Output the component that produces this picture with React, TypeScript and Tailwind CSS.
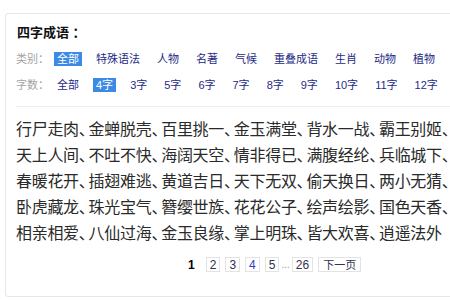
const categories = ['全部', '特殊语法', '人物', '名著', '气候', '重叠成语', '生肖', '动物', '植物', '其他'];
const counts = ['全部', '4字', '3字', '5字', '6字', '7字', '8字', '9字', '10字', '11字', '12字'];

const idioms = [
  '行尸走肉', '金蝉脱壳', '百里挑一', '金玉满堂', '背水一战', '霸王别姬',
  '天上人间', '不吐不快', '海阔天空', '情非得已', '满腹经纶', '兵临城下',
  '春暖花开', '插翅难逃', '黄道吉日', '天下无双', '偷天换日', '两小无猜',
  '卧虎藏龙', '珠光宝气', '簪缨世族', '花花公子', '绘声绘影', '国色天香',
  '相亲相爱', '八仙过海', '金玉良缘', '掌上明珠', '皆大欢喜', '逍遥法外',
];

function FilterRow({ label, items, active }: { label: string; items: string[]; active: string }) {
  return (
    <div className="flex items-center h-[26px] gap-[11px] whitespace-nowrap text-[11px]">
      <span className="text-[#a3a3a3] w-[27px]">{label}</span>
      {items.map((item) => (
        <span
          key={item}
          className={
            item === active
              ? 'px-[3px] h-[14px] leading-[14px] bg-[#3d8ae6] text-white'
              : 'px-[3px] h-[14px] leading-[14px] text-[#252a86]'
          }
        >
          {item}
        </span>
      ))}
    </div>
  );
}

export default function App() {
  return (
    <div
      className="w-[450px] h-[300px] overflow-hidden bg-white pt-[13px] pl-[5px]"
      style={{ fontFamily: '"Liberation Sans", "Noto Sans CJK SC", sans-serif' }}
    >
      <div className="w-[470px] h-[284px] border border-[#e6e6e6] rounded-[3px] pl-[10px] pt-[9px]">
        <h2 className="text-[13px] leading-[20px] font-bold text-[#111] ml-[1px]">四字成语 ：</h2>

        <div className="mt-[3px]">
          <FilterRow label="类别：" items={categories} active="全部" />
          <FilterRow label="字数：" items={counts} active="4字" />
        </div>

        <div className="mt-[8px] border-t border-[#ececec] w-[460px]" />

        {/* 成语列表 */}
        <div className="mt-[10px] grid grid-cols-[repeat(6,72.6px)] text-[16px] leading-[26px] text-[#2a2a2a]">
          {idioms.map((w, i) => (
            <span key={w} className="whitespace-nowrap">
              <span className="tracking-[-0.3px]">{w}</span>
              {i < idioms.length - 1 && <span className="tracking-[-7.6px]">、</span>}
            </span>
          ))}
        </div>

        {/* 分页 */}
        <div className="mt-[10px] flex items-center h-[15px] pl-[172px] gap-[5px] text-[12px] text-[#2e3350]">
          <span className="font-bold text-black mr-[6px]">1</span>
          <span className="h-[15px] leading-[14px] px-[3px] border border-[#e3e3e3]">2</span>
          <span className="h-[15px] leading-[14px] px-[3px] border border-[#e3e3e3]">3</span>
          <span className="h-[15px] leading-[14px] px-[3px] border border-[#e3e3e3] text-[#3340c4]">4</span>
          <span className="h-[15px] leading-[14px] px-[3px] border border-[#e3e3e3]">5</span>
          <span className="text-[#999] text-[10px] -mx-[3px]">...</span>
          <span className="h-[15px] leading-[14px] px-[3px] border border-[#e3e3e3]">26</span>
          <span className="h-[15px] leading-[14px] px-[4px] border border-[#e3e3e3] text-[11px]">下一页</span>
        </div>
      </div>
    </div>
  );
}
